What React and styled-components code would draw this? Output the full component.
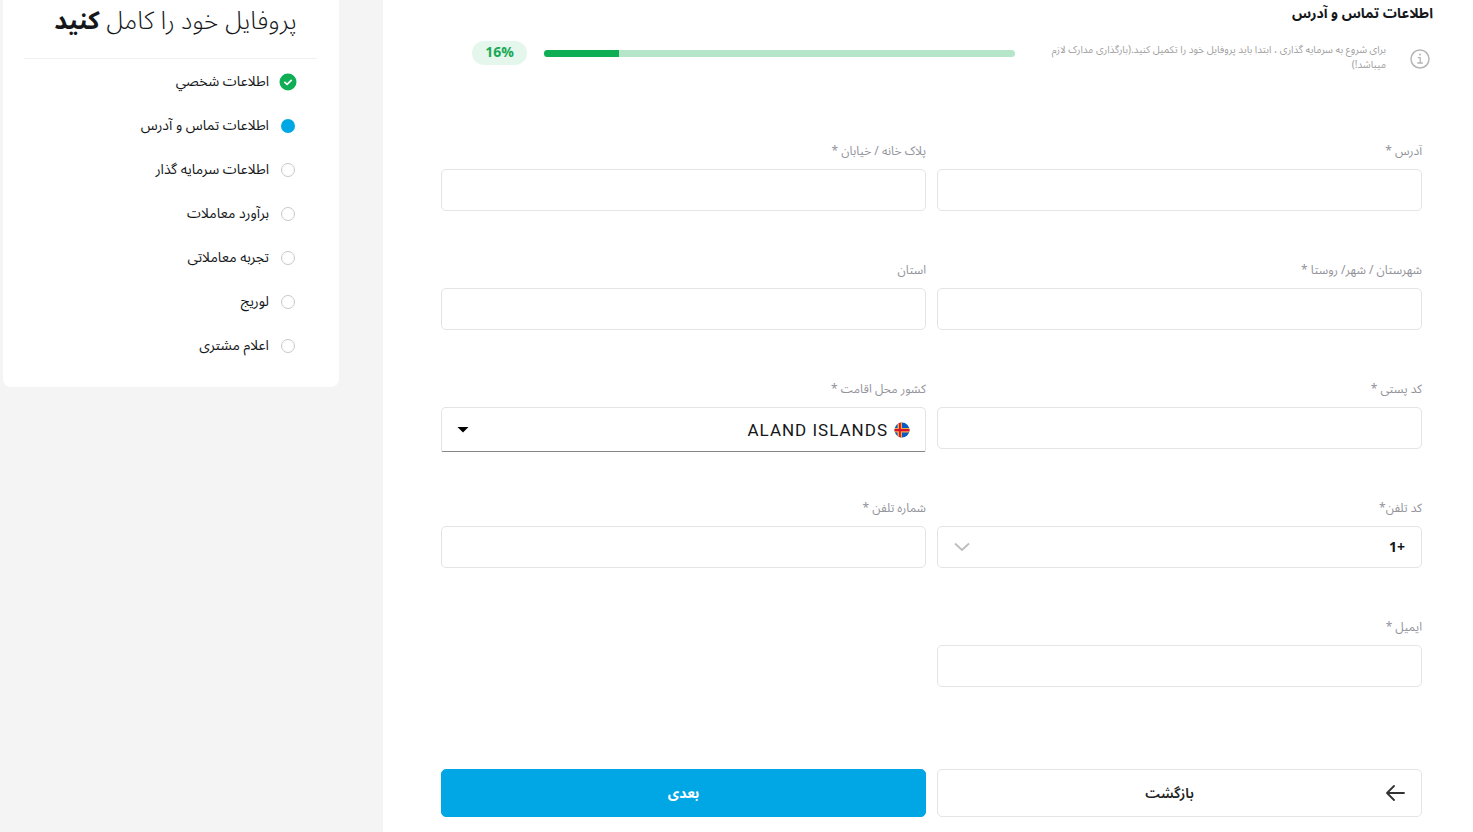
import styled, { createGlobalStyle } from "styled-components";

const GlobalStyle = createGlobalStyle`
  * {
    box-sizing: border-box;
  }
  body {
    margin: 0;
    background: #fff;
    color: #15171a;
    font-family: "Noto Sans Arabic", "Noto Sans", "DejaVu Sans", sans-serif;
  }
  button, input, select {
    font-family: inherit;
  }
`;

const Page = styled.div`
  display: flex;
  direction: rtl;
  min-height: 100vh;
`;

const Main = styled.main`
  flex: 1;
  min-width: 0;
  padding: 0 40px 15px 58px;
`;

const Title = styled.h1`
  margin: 0;
  font-size: 14px;
  line-height: 28px;
  font-weight: 700;
`;

const ProgressRow = styled.div`
  display: flex;
  align-items: center;
  height: 50px;
  padding: 0 3px 0 31px;
`;

const InfoIcon = styled.svg`
  flex: none;
  width: 20px;
  height: 20px;
  margin-top: 12px;
  margin-left: 24px;
`;

const Hint = styled.p`
  flex: none;
  width: 342px;
  margin: 8px 0 0;
  color: #a0a0a0;
  font-size: 10px;
  line-height: 15px;
`;

const Bar = styled.div`
  flex: 1;
  height: 7px;
  margin: 0 29px 0 17px;
  border-radius: 4px;
  background: #b5e6c9;
  direction: ltr;
  overflow: hidden;
`;

const BarFill = styled.div`
  height: 100%;
  background: #0eaf54;
`;

const Badge = styled.span`
  flex: none;
  width: 55px;
  border-radius: 12px;
  background: #e5f7ed;
  color: #18a957;
  font-size: 14px;
  line-height: 24px;
  font-weight: 700;
  text-align: center;
`;

const Form = styled.form`
  padding: 64px 11px 0 0;
`;

const Fields = styled.div`
  display: grid;
  grid-template-columns: 1fr 1fr;
  column-gap: 11px;
  row-gap: 50px;
`;

const Label = styled.label`
  display: block;
  height: 27px;
  color: #93939b;
  font-size: 12px;
  line-height: 20px;
`;

const Input = styled.input`
  display: block;
  width: 100%;
  height: 42px;
  padding: 0 16px;
  border: 1px solid #e4e4e4;
  border-radius: 5px;
  background: #fff;
  font-size: 14px;
`;

const SelectBox = styled.div`
  display: flex;
  align-items: center;
  height: ${(props) => (props.$filled ? 45 : 42)}px;
  margin-bottom: ${(props) => (props.$filled ? -3 : 0)}px;
  padding: 0 ${(props) => (props.$filled ? 15 : 16)}px;
  border: 1px solid #e4e4e4;
  border-bottom-color: ${(props) => (props.$filled ? "#858585" : "#e4e4e4")};
  border-radius: ${(props) => (props.$filled ? "5px 5px 2px 2px" : "5px")};
`;

const Select = styled.select`
  flex: 1;
  height: 100%;
  padding: 0;
  border: 0;
  outline: 0;
  appearance: none;
  background: transparent;
  color: #15171a;
  direction: rtl;
  font-size: 14px;
  font-weight: 700;
`;

const CountrySelect = styled(Select)`
  margin-right: 6px;
  font-family: Roboto, "Liberation Sans", sans-serif;
  font-size: 17px;
  font-weight: 400;
  letter-spacing: 1px;
`;

const Actions = styled.div`
  display: grid;
  grid-template-columns: 1fr 1fr;
  column-gap: 11px;
  margin-top: 82px;
`;

const Button = styled.button`
  display: flex;
  align-items: center;
  height: 48px;
  padding: 0 16px;
  border: 1px solid ${(props) => (props.$primary ? "#00a7e4" : "#e4e4e4")};
  border-radius: 5px;
  background: ${(props) => (props.$primary ? "#00a7e4" : "#fff")};
  color: ${(props) => (props.$primary ? "#fff" : "#222")};
  font-size: 14px;
  font-weight: ${(props) => (props.$primary ? 700 : 600)};
  cursor: pointer;
  span {
    flex: 1;
  }
`;

const Sidebar = styled.aside`
  flex: none;
  width: 26%;
  padding: 0 44px 0 3px;
  background: #f4f4f4;
`;

const Card = styled.div`
  height: 387px;
  padding: 0 22px 0 21px;
  border-radius: 0 0 8px 8px;
  background: #fff;
`;

const CardTitle = styled.h2`
  margin: 0;
  height: 59px;
  padding-right: 20px;
  border-bottom: 1px solid #f1f1f1;
  font-size: 25px;
  line-height: 43px;
  font-weight: 300;
  white-space: nowrap;
  b {
    font-weight: 700;
  }
`;

const Steps = styled.ol`
  margin: 0;
  padding: 1px 20px 0 0;
  list-style: none;
`;

const Step = styled.li`
  display: flex;
  align-items: center;
  gap: 10px;
  height: 44px;
  font-size: 14px;
  span {
    padding-bottom: 2px;
  }
`;

const StepIcon = styled.svg`
  flex: none;
  width: 18px;
  height: 18px;
`;

const steps = [
  { label: "اطلاعات شخصي", state: "done" },
  { label: "اطلاعات تماس و آدرس", state: "current" },
  { label: "اطلاعات سرمایه گذار" },
  { label: "برآورد معاملات" },
  { label: "تجربه معاملاتی" },
  { label: "لوریج" },
  { label: "اعلام مشتری" },
];

const progress = 16;

function StepMark({ state }) {
  if (state === "done") {
    return (
      <StepIcon viewBox="0 0 18 18">
        <circle cx="9" cy="9" r="8.5" fill="#0eaf54" />
        <path d="M5.3 8.8l2.8 2.6 4.6-4.6" fill="none" stroke="#fff" strokeWidth="1.7" />
      </StepIcon>
    );
  }
  return (
    <StepIcon viewBox="0 0 18 18">
      {state === "current" ? (
        <circle cx="9" cy="9" r="7" fill="#00a7e4" />
      ) : (
        <circle cx="9" cy="9" r="6.5" fill="#fff" stroke="#c8c8c8" />
      )}
    </StepIcon>
  );
}

function Flag() {
  return (
    <svg width="16" height="16" viewBox="0 0 16 16">
      <clipPath id="flag">
        <circle cx="8" cy="8" r="7.5" />
      </clipPath>
      <g clipPath="url(#flag)">
        <path fill="#0a5bbf" d="M0 0h16v16H0z" />
        <path fill="#f0a840" d="M3.5 0h4.5v16H3.5zM0 6h16v4.4H0z" />
        <path fill="#da1030" d="M5 0h1.8v16H5zM0 7.1h16v2.2H0z" />
      </g>
    </svg>
  );
}

function TextField({ id, label, type = "text" }) {
  return (
    <div>
      <Label htmlFor={id}>{label}</Label>
      <Input id={id} name={id} type={type} />
    </div>
  );
}

export default function App() {
  return (
    <Page>
      <GlobalStyle />
      <Main>
        <Title>اطلاعات تماس و آدرس</Title>
        <ProgressRow>
          <InfoIcon viewBox="0 0 20 20" fill="none" stroke="#b5b5b5" strokeWidth="1.5">
            <circle cx="10" cy="10" r="9" />
            <path d="M7.8 8.6h2.4v5M7.2 14h5.6" strokeWidth="1.3" />
            <circle cx="10" cy="5.6" r="1" fill="#b5b5b5" stroke="none" />
          </InfoIcon>
          <Hint>
            برای شروع به سرمایه گذاری ، ابتدا باید پروفایل خود را تکمیل کنید.(بارگذاری مدارک لازم
            میباشد!)
          </Hint>
          <Bar>
            <BarFill style={{ width: `${progress}%` }} />
          </Bar>
          <Badge>{progress}%</Badge>
        </ProgressRow>

        <Form onSubmit={(e) => e.preventDefault()}>
          <Fields>
            <TextField id="address" label="آدرس *" />
            <TextField id="street" label="پلاک خانه / خیابان *" />
            <TextField id="city" label="شهرستان / شهر/ روستا *" />
            <TextField id="state" label="استان" />
            <TextField id="zip" label="کد پستی *" />
            <div>
              <Label htmlFor="country">کشور محل اقامت *</Label>
              <SelectBox $filled>
                <Flag />
                <CountrySelect id="country" name="country" defaultValue="AX">
                  <option value="AX">ALAND ISLANDS</option>
                </CountrySelect>
                <svg width="12" height="6" viewBox="0 0 12 6">
                  <path d="M.5 0h11L6 5.5z" />
                </svg>
              </SelectBox>
            </div>
            <div>
              <Label htmlFor="phone-code">کد تلفن*</Label>
              <SelectBox>
                <Select id="phone-code" name="phone-code" defaultValue="1">
                  <option value="1">+1</option>
                </Select>
                <svg width="16" height="10" viewBox="0 0 16 10" fill="none" stroke="#bdbdbd" strokeWidth="1.8">
                  <path d="M1 1.5l7 6.5 7-6.5" />
                </svg>
              </SelectBox>
            </div>
            <TextField id="phone" label="شماره تلفن *" type="tel" />
            <TextField id="email" label="ایمیل *" type="email" />
          </Fields>

          <Actions>
            <Button type="button">
              <svg width="20" height="16" viewBox="0 0 20 16" fill="none" stroke="#333" strokeWidth="1.8">
                <path d="M19 8H2M9 1L2 8l7 7" strokeLinecap="round" strokeLinejoin="round" />
              </svg>
              <span>بازگشت</span>
            </Button>
            <Button type="submit" $primary>
              <span>بعدی</span>
            </Button>
          </Actions>
        </Form>
      </Main>

      <Sidebar>
        <Card>
          <CardTitle>
            پروفایل خود را کامل <b>کنید</b>
          </CardTitle>
          <Steps>
            {steps.map((step) => (
              <Step key={step.label}>
                <StepMark state={step.state} />
                <span>{step.label}</span>
              </Step>
            ))}
          </Steps>
        </Card>
      </Sidebar>
    </Page>
  );
}
